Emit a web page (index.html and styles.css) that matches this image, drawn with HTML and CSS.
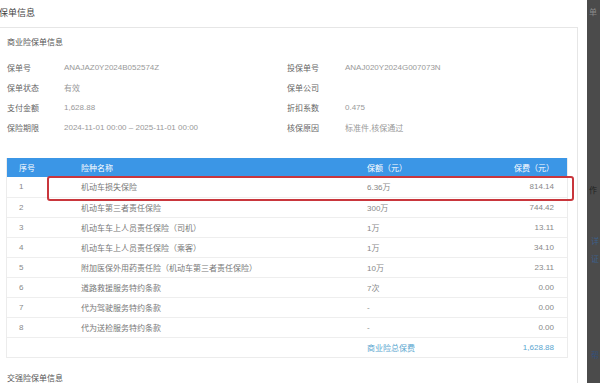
FILE: index.html
```html
<!DOCTYPE html>
<html lang="zh-CN">
<head>
<meta charset="utf-8">
<title>保单信息</title>
<link rel="stylesheet" href="styles.css">
</head>
<body>
<div class="page">
  <div class="main">
    <div class="title">保单信息</div>
    <div class="panel">
      <div class="sub">商业险保单信息</div>
      <div class="info">
        <span class="lbl">保单号</span><span class="val">ANAJAZ0Y2024B052574Z</span>
        <span class="lbl">投保单号</span><span class="val">ANAJ020Y2024G007073N</span>
        <span class="lbl">保单状态</span><span class="val">有效</span>
        <span class="lbl">保单公司</span><span class="val"></span>
        <span class="lbl">支付金额</span><span class="val">1,628.88</span>
        <span class="lbl">折扣系数</span><span class="val">0.475</span>
        <span class="lbl">保险期限</span><span class="val">2024-11-01 00:00 – 2025-11-01 00:00</span>
        <span class="lbl">核保原因</span><span class="val">标准件,核保通过</span>
      </div>
      <div class="table-wrap">
        <table class="grid">
          <colgroup><col class="c1"><col class="c2"><col class="c3"><col class="c4"></colgroup>
          <thead>
            <tr><th>序号</th><th>险种名称</th><th>保额（元）</th><th class="r">保费（元）</th></tr>
          </thead>
          <tbody>
            <tr><td>1</td><td>机动车损失保险</td><td>6.36万</td><td class="r">814.14</td></tr>
            <tr><td>2</td><td>机动车第三者责任保险</td><td>300万</td><td class="r">744.42</td></tr>
            <tr><td>3</td><td>机动车车上人员责任保险（司机）</td><td>1万</td><td class="r">13.11</td></tr>
            <tr><td>4</td><td>机动车车上人员责任保险（乘客）</td><td>1万</td><td class="r">34.10</td></tr>
            <tr><td>5</td><td>附加医保外用药责任险（机动车第三者责任保险）</td><td>10万</td><td class="r">23.11</td></tr>
            <tr><td>6</td><td>道路救援服务特约条款</td><td>7次</td><td class="r">0.00</td></tr>
            <tr><td>7</td><td>代为驾驶服务特约条款</td><td>-</td><td class="r">0.00</td></tr>
            <tr><td>8</td><td>代为送检服务特约条款</td><td>-</td><td class="r">0.00</td></tr>
            <tr class="total"><td></td><td></td><td class="link">商业险总保费</td><td class="r link">1,628.88</td></tr>
          </tbody>
        </table>
        <div class="mark"></div>
      </div>
      <div class="sub sub2">交强险保单信息</div>
    </div>
  </div>
  <div class="side">
    <span class="s1">单</span>
    <span class="s2">作</span>
    <span class="s3">详</span>
    <span class="s3 s4">证</span>
    <span class="s5">帮</span>
  </div>
</div>
</body>
</html>
```
FILE: styles.css
```css
html, body {
  margin: 0;
  padding: 0;
  background: #fff;
}
body {
  font-family: "Liberation Sans", "Noto Sans CJK SC", sans-serif;
  font-size: 8px;
  color: #666;
  overflow: hidden;
}
.page {
  display: flex;
  width: 600px;
  height: 383px;
  overflow: hidden;
}
.main {
  width: 597px;
  margin-left: -10px;
  flex: none;
}
.title {
  height: 27px;
  box-sizing: border-box;
  padding: 0 0 3px 9px;
  display: flex;
  align-items: center;
  font-size: 9px;
  color: #444;
}
.panel {
  width: 588px;
  box-sizing: border-box;
  border: 1px solid #e6e6e6;
  border-bottom: none;
  padding: 6px 9px 0 15px;
  height: 400px;
}
.sub {
  line-height: 18px;
  padding-left: 1px;
  color: #555;
}
.info {
  margin-top: 5px;
  display: grid;
  grid-template-columns: 57px 223px 58px 1fr;
  grid-auto-rows: 20px;
  align-items: center;
  padding-left: 1px;
}
.lbl { color: #666; }
.val { color: #999; }
.table-wrap {
  position: relative;
  margin-top: 21px;
  border: 1px solid #ececec;
  border-top: none;
}
.grid {
  width: 100%;
  border-collapse: collapse;
  table-layout: fixed;
}
.c1 { width: 62px; }
.c2 { width: 286px; }
.c3 { width: 120px; }
.grid th {
  background: #3b96e6;
  color: #fff;
  font-weight: normal;
  height: 19px;
  padding: 0 12px;
  text-align: left;
}
.grid td {
  height: 20px;
  box-sizing: border-box;
  padding: 0 12px;
  color: #888;
  border-bottom: 1px solid #eee;
  white-space: nowrap;
}
.grid td:nth-child(2) { color: #777; }
.grid tr.total td { border-bottom: none; }
.grid .r {
  text-align: right;
  padding-right: 13px;
}
.grid td.link { color: #5aa6cf; }
.mark {
  position: absolute;
  left: 40px;
  top: 18px;
  width: 527px;
  height: 25px;
  box-sizing: border-box;
  border: 2px solid #c9363c;
  border-radius: 3px;
}
.sub2 {
  margin-top: 11px;
  line-height: 20px;
  color: #555;
}
.side {
  flex: 1;
  background: #4b4b4b;
  display: flex;
  flex-direction: column;
  font-size: 8px;
  overflow: hidden;
}
.side span { display: block; line-height: 10px; }
.s1 { margin-top: 8px; color: #8a8a8a; padding-left: 2px; }
.s2 { margin-top: 168px; color: #222; padding-left: 2px; }
.s3 { margin-top: 41px; color: #3d5f8a; padding-left: 4px; }
.s4 { margin-top: 8px; }
.s5 { margin-top: 86px; color: #34507a; padding-left: 4px; }
```
